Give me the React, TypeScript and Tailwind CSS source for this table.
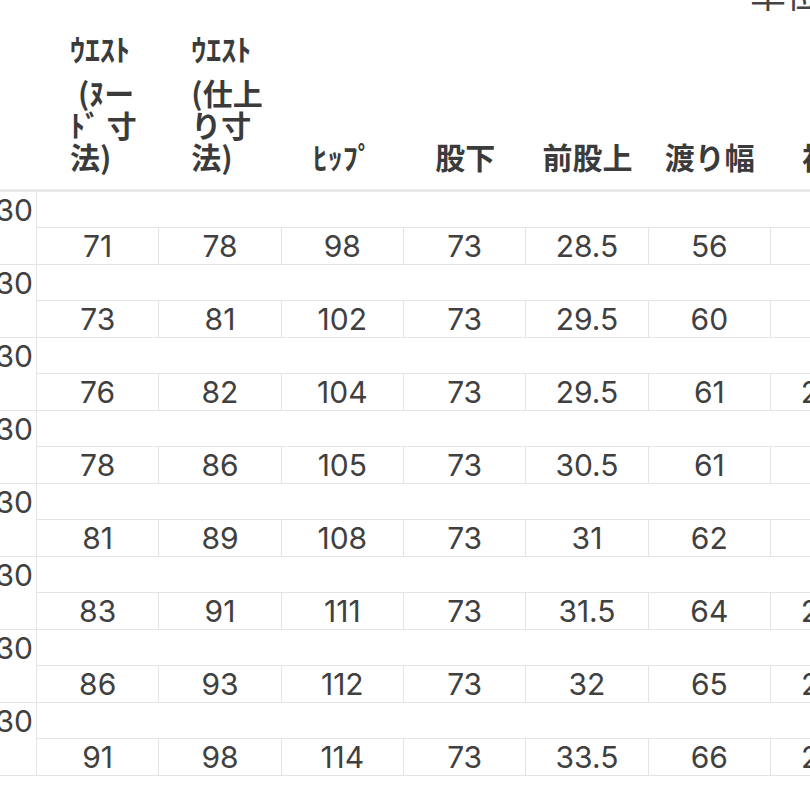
const JP = "font-['Noto_Sans_CJK_JP',sans-serif]";
const NUM = "font-['Inter','Noto_Sans',sans-serif]";

const rows = [
  ['71', '78', '98', '73', '28.5', '56', '19'],
  ['73', '81', '102', '73', '29.5', '60', '20'],
  ['76', '82', '104', '73', '29.5', '61', '23.5'],
  ['78', '86', '105', '73', '30.5', '61', '22'],
  ['81', '89', '108', '73', '31', '62', '22'],
  ['83', '91', '111', '73', '31.5', '64', '24.5'],
  ['86', '93', '112', '73', '32', '65', '25.5'],
  ['91', '98', '114', '73', '33.5', '66', '26.5'],
];

const cols = 'grid grid-cols-[37px_repeat(7,122.33px)]';

export default function App() {
  return (
    <div className="w-[810px] h-[810px] overflow-hidden bg-white text-[#3b3b3b]">
      {/* unit label, cut off at the top */}
      <div className="flex h-0">
        <div className={`${JP} ml-[750px] -mt-[28px] text-[36px] leading-[40px] whitespace-nowrap text-[#444]`}>
          単位：cm
        </div>
      </div>

      {/* Header */}
      <div className={`${cols} ${JP} h-[192px] border-b-[3px] border-[#e9e9e9] font-bold text-[30px]`}>
        <div />
        <div className="flex flex-col justify-end pb-[17px] pl-[33px] leading-[32px]">
          <div className="mb-[12px]">ｳｴｽﾄ</div>
          <div className="pl-[8px]">(ﾇー</div>
          <div>ﾄﾞ 寸</div>
          <div>法)</div>
        </div>
        <div className="flex flex-col justify-end pb-[17px] pl-[32px] leading-[32px]">
          <div className="mb-[12px]">ｳｴｽﾄ</div>
          <div>(仕上</div>
          <div>り寸</div>
          <div>法)</div>
        </div>
        {['ﾋｯﾌﾟ', '股下', '前股上', '渡り幅', '裾幅'].map((h) => (
          <div key={h} className="flex items-end justify-center pb-[17px] leading-[32px] whitespace-nowrap">
            {h}
          </div>
        ))}
      </div>

      {/* Body */}
      {rows.map((r, i) => (
        <div key={i} className={`${cols} ${NUM} grid-rows-[36px_36px] border-b border-[#e4e4e4] text-[30px] text-[#404040]`}>
          <div className="row-span-2 border-r border-[#e4e4e4] flex justify-end pr-[3px] leading-[36px]">
            30
          </div>
          <div className="col-span-7 border-b border-[#e4e4e4]" />
          {r.map((v, j) => (
            <div
              key={j}
              className={`flex items-center justify-center leading-[36px] whitespace-nowrap ${j < 6 ? 'border-r border-[#e4e4e4]' : ''}`}
            >
              {v}
            </div>
          ))}
        </div>
      ))}
    </div>
  );
}
